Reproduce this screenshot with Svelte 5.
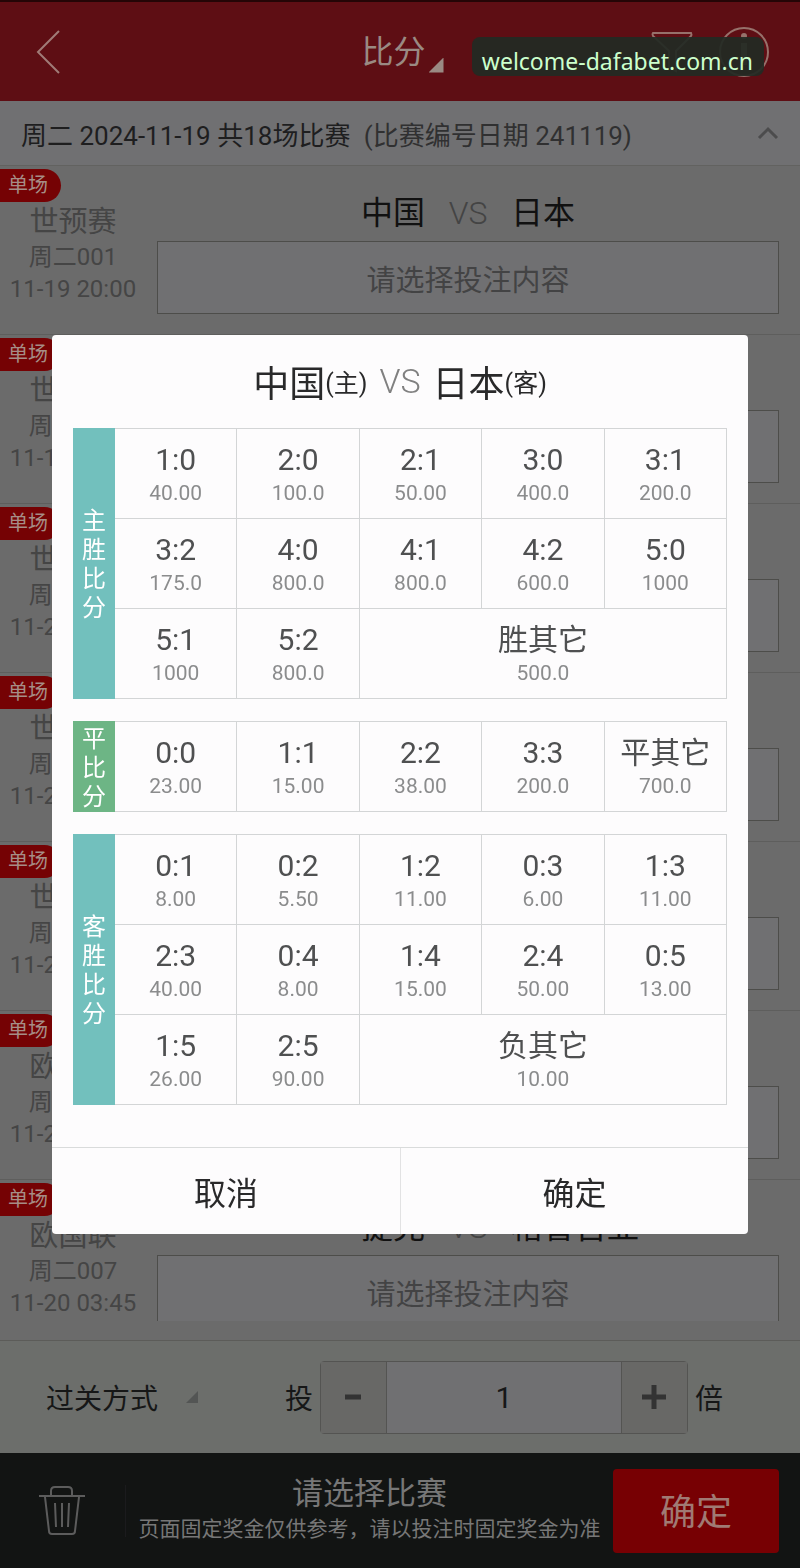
<script lang="ts">
	type Match = { league: string; no: string; time: string; home?: string; away?: string };
	type Option = { score: string; odds: string; wide?: boolean };
	type Group = { name: string; kind: string; options: Option[] };

	const matches: Match[] = [
		{ league: '世预赛', no: '周二001', time: '11-19 20:00', home: '中国', away: '日本' },
		{ league: '世预赛', no: '周二002', time: '11-19 22:00' },
		{ league: '世预赛', no: '周二003', time: '11-20 00:15' },
		{ league: '世预赛', no: '周二004', time: '11-20 02:00' },
		{ league: '世预赛', no: '周二005', time: '11-20 03:00' },
		{ league: '欧国联', no: '周二006', time: '11-20 03:45' },
		{ league: '欧国联', no: '周二007', time: '11-20 03:45', home: '捷克', away: '格鲁吉亚' }
	];

	const groups: Group[] = [
		{
			name: '主胜比分',
			kind: 'win',
			options: [
				{ score: '1:0', odds: '40.00' },
				{ score: '2:0', odds: '100.0' },
				{ score: '2:1', odds: '50.00' },
				{ score: '3:0', odds: '400.0' },
				{ score: '3:1', odds: '200.0' },
				{ score: '3:2', odds: '175.0' },
				{ score: '4:0', odds: '800.0' },
				{ score: '4:1', odds: '800.0' },
				{ score: '4:2', odds: '600.0' },
				{ score: '5:0', odds: '1000' },
				{ score: '5:1', odds: '1000' },
				{ score: '5:2', odds: '800.0' },
				{ score: '胜其它', odds: '500.0', wide: true }
			]
		},
		{
			name: '平比分',
			kind: 'draw',
			options: [
				{ score: '0:0', odds: '23.00' },
				{ score: '1:1', odds: '15.00' },
				{ score: '2:2', odds: '38.00' },
				{ score: '3:3', odds: '200.0' },
				{ score: '平其它', odds: '700.0' }
			]
		},
		{
			name: '客胜比分',
			kind: 'lose',
			options: [
				{ score: '0:1', odds: '8.00' },
				{ score: '0:2', odds: '5.50' },
				{ score: '1:2', odds: '11.00' },
				{ score: '0:3', odds: '6.00' },
				{ score: '1:3', odds: '11.00' },
				{ score: '2:3', odds: '40.00' },
				{ score: '0:4', odds: '8.00' },
				{ score: '1:4', odds: '15.00' },
				{ score: '2:4', odds: '50.00' },
				{ score: '0:5', odds: '13.00' },
				{ score: '1:5', odds: '26.00' },
				{ score: '2:5', odds: '90.00' },
				{ score: '负其它', odds: '10.00', wide: true }
			]
		}
	];

	let open = $state(true);
	let times = $state(1);
	let picked: string[] = $state([]);

	function toggle(score: string) {
		picked = picked.includes(score) ? picked.filter((s) => s !== score) : [...picked, score];
	}
</script>

<div class="page">
	<header>
		<button class="back" aria-label="返回">
			<svg width="26" height="46" viewBox="0 0 26 46"><path d="M24 2 3 23l21 21" /></svg>
		</button>
		<button class="play">比分<i class="corner"></i></button>
		<div class="tools">
			<button aria-label="筛选">
				<svg width="44" height="46" viewBox="0 0 44 46">
					<path d="M3 4h38q1 2 0 3L26 22v20l-7-4V22L3 7q-1-2 0-3z" />
				</svg>
			</button>
			<button aria-label="说明">
				<svg width="52" height="52" viewBox="0 0 52 52">
					<circle cx="26" cy="26" r="24" />
					<circle class="solid" cx="26" cy="10" r="3" />
					<path class="stem" d="M26 17v22" />
				</svg>
			</button>
		</div>
		<div class="site">welcome-dafabet.com.cn</div>
	</header>

	<button class="day">
		<span>周二 2024-11-19 共18场比赛 <em>(比赛编号日期 241119)</em></span>
		<svg width="22" height="14" viewBox="0 0 22 14"><path d="M2 12l9-9 9 9" /></svg>
	</button>

	<main>
		{#each matches as m}
			<section class="match">
				<span class="badge">单场</span>
				<div class="info">
					<span class="league">{m.league}</span>
					<span class="no">{m.no}</span>
					<span class="time">{m.time}</span>
				</div>
				<div class="bet">
					<div class="teams">
						{#if m.home}
							<span class="home">{m.home}</span>
							<span class="vs">VS</span>
							<span>{m.away}</span>
						{/if}
					</div>
					<button class="choose" aria-label="投注" onclick={() => (open = true)}>
						{#if m.home}请选择投注内容{/if}
					</button>
				</div>
			</section>
		{/each}
	</main>

	<div class="options">
		<button class="pass">过关方式<i class="corner"></i></button>
		<div class="times">
			<label for="times">投</label>
			<div class="stepper">
				<button aria-label="减少" onclick={() => (times = Math.max(1, times - 1))}>
					<svg width="26" height="26" viewBox="0 0 26 26"><path d="M5 13h16" /></svg>
				</button>
				<input id="times" type="text" inputmode="numeric" bind:value={times} />
				<button aria-label="增加" onclick={() => (times += 1)}>
					<svg width="26" height="26" viewBox="0 0 26 26"><path d="M1 13h24M13 1v24" /></svg>
				</button>
			</div>
			<span>倍</span>
		</div>
	</div>

	<footer>
		<button class="trash" aria-label="清空">
			<svg width="48" height="52" viewBox="0 0 48 52">
				<path d="M1 11h46M13 10V6q0-4 4-4h13q4 0 4 4v4" />
				<path d="M7 12l4 34q0 3 3 3h20q3 0 3-3l4-34M17 18l1 24M24 18v24M31 18l-1 24" />
			</svg>
		</button>
		<div class="summary">
			<p class="hint">请选择比赛</p>
			<p class="note">页面固定奖金仅供参考，请以投注时固定奖金为准</p>
		</div>
		<button class="submit">确定</button>
	</footer>
</div>

{#if open}
	<div class="overlay">
		<div class="dialog" role="dialog" aria-modal="true" aria-labelledby="dialog-title">
			<h2 id="dialog-title">
				中国<small>(主)</small><span>VS</span>日本<small>(客)</small>
			</h2>

			<div class="groups">
				{#each groups as g}
					<div class="group">
						<div class="side {g.kind}"><span>{g.name}</span></div>
						<div class="cells">
							{#each g.options as o}
								<button
									class:wide={o.wide}
									class:picked={picked.includes(o.score)}
									onclick={() => toggle(o.score)}
								>
									<span class="score">{o.score}</span>
									<span class="odds">{o.odds}</span>
								</button>
							{/each}
						</div>
					</div>
				{/each}
			</div>

			<div class="actions">
				<button onclick={() => (open = false)}>取消</button>
				<button onclick={() => (open = false)}>确定</button>
			</div>
		</div>
	</div>
{/if}

<style>
	:global(body) {
		background: #6b6b6b;
		font-family: Roboto, 'Noto Sans CJK SC', sans-serif;
	}

	button,
	input {
		margin: 0;
		padding: 0;
		border: 0;
		background: none;
		font: inherit;
		color: inherit;
	}

	button {
		cursor: pointer;
	}

	svg {
		display: block;
		fill: none;
		stroke: currentColor;
		stroke-width: 2;
	}

	.page {
		display: flex;
		flex-direction: column;
		height: 100vh;
		color: #161717;
	}

	.corner {
		width: 15px;
		height: 15px;
		background: currentColor;
		clip-path: polygon(100% 0, 100% 100%, 0 100%);
	}

	/* top bar */
	header {
		position: relative;
		display: grid;
		grid-template-columns: 1fr auto 1fr;
		align-items: center;
		box-sizing: border-box;
		height: 101px;
		padding: 0 30px 0 35px;
		border-top: 2px solid #240506;
		background: #5e0e14;
		color: #96716b;
	}

	.back {
		justify-self: start;
		color: #a07b77;
	}

	.play {
		display: flex;
		align-items: flex-end;
		gap: 3px;
		font-size: 32px;
		line-height: 42px;
		color: #9a8a83;
	}

	.tools {
		display: flex;
		align-items: center;
		justify-content: flex-end;
		gap: 24px;
	}

	.solid {
		fill: currentColor;
		stroke: none;
	}

	.stem {
		stroke-width: 6;
	}

	.site {
		position: absolute;
		top: 35px;
		right: 36px;
		box-sizing: border-box;
		height: 39px;
		padding: 9px 11px 0 10px;
		border-radius: 8px;
		background: rgba(34, 42, 35, 0.93);
		font-family: 'Noto Sans', sans-serif;
		font-size: 23px;
		line-height: 30px;
		color: #ccffcc;
	}

	.day {
		display: flex;
		align-items: center;
		justify-content: space-between;
		height: 65px;
		padding: 0 21px;
		border-bottom: 1px solid #626260;
		background: #707072;
		font-size: 26px;
		color: #1e1e1f;
	}

	.day em {
		margin-left: 7px;
		font-style: normal;
		color: #303031;
	}

	.day svg {
		color: #4c4c4d;
		stroke-width: 3;
	}

	/* match list */
	main {
		flex: 1;
		min-height: 0;
		margin-bottom: 19px;
		overflow: hidden;
	}

	.match {
		position: relative;
		display: grid;
		grid-template-columns: 146px 1fr;
		column-gap: 11px;
		padding-right: 21px;
		border-bottom: 1px solid #5e5e5d;
	}

	.badge {
		position: absolute;
		top: 3px;
		left: 0;
		padding: 0 13px 0 8px;
		border-radius: 0 17px 17px 0;
		background: #750204;
		font-size: 20px;
		line-height: 33px;
		color: #a68d86;
	}

	.info {
		display: flex;
		flex-direction: column;
		align-items: center;
		padding-top: 38px;
		color: #454545;
	}

	.league {
		font-size: 29px;
		line-height: 36px;
	}

	.no {
		font-size: 24px;
		line-height: 34px;
	}

	.time {
		font-size: 24px;
		line-height: 30px;
	}

	.bet {
		padding: 27px 0 20px;
	}

	.teams {
		display: grid;
		grid-template-columns: 1fr 86px 1fr;
		min-height: 40px;
		margin-bottom: 8px;
		font-size: 32px;
		line-height: 40px;
		color: #111;
	}

	.home {
		text-align: right;
	}

	.vs {
		text-align: center;
		font-weight: 300;
		color: #444;
	}

	.choose {
		display: block;
		width: 100%;
		height: 73px;
		border: 1px solid #4d4d4a;
		background: #707072;
		font-size: 29px;
		color: #434344;
	}

	/* pass type and multiplier */
	.options {
		display: flex;
		align-items: center;
		justify-content: space-between;
		box-sizing: border-box;
		height: 113px;
		padding: 0 77px 0 46px;
		border-top: 1px solid #5c5c59;
		background: #6c6e6b;
		font-size: 28px;
	}

	.pass {
		display: flex;
		align-items: center;
		gap: 28px;
	}

	.pass .corner {
		width: 12px;
		height: 12px;
		color: #535554;
	}

	.times {
		display: flex;
		align-items: center;
		gap: 7px;
	}

	.stepper {
		display: grid;
		grid-template-columns: 65px 236px 65px;
		height: 71px;
		border: 1px solid #545452;
		border-radius: 4px;
		background: #707072;
	}

	.stepper button {
		display: grid;
		place-items: center;
		background: #686866;
		color: #333;
	}

	.stepper svg {
		stroke-width: 5;
	}

	.stepper input {
		min-width: 0;
		border: solid #545452;
		border-width: 0 1px;
		text-align: center;
		font-size: 30px;
	}

	/* bottom bar */
	footer {
		display: flex;
		align-items: center;
		box-sizing: border-box;
		height: 115px;
		padding: 0 21px 0 38px;
		background: #121413;
		color: #777;
	}

	.trash {
		padding-right: 39px;
		border-right: 1px solid #1b1b1d;
		color: #5c5c5c;
	}

	.summary {
		flex: 1;
		text-align: center;
		white-space: nowrap;
	}

	.summary p {
		margin: 0;
	}

	.hint {
		font-size: 31px;
		line-height: 36px;
	}

	.note {
		font-size: 21px;
		line-height: 34px;
	}

	.submit {
		width: 166px;
		height: 84px;
		padding-bottom: 3px;
		border-radius: 4px;
		background: #770003;
		font-size: 36px;
		color: #a07a74;
	}

	/* score dialog */
	.overlay {
		position: fixed;
		inset: 0;
		display: flex;
		align-items: center;
		padding: 0 52px;
	}

	.dialog {
		flex: 1;
		border-radius: 4px;
		background: #fdfcfd;
		overflow: hidden;
	}

	h2 {
		display: flex;
		align-items: center;
		justify-content: center;
		height: 93px;
		margin: 0;
		font-size: 36px;
		font-weight: 400;
		color: #29292a;
	}

	h2 small {
		font-size: 25px;
	}

	h2 span {
		margin: 0 12px;
		font-size: 34px;
		font-weight: 300;
		color: #808080;
	}

	.groups {
		display: flex;
		flex-direction: column;
		gap: 22px;
		padding: 0 21px 42px;
	}

	.group {
		display: grid;
		grid-template-columns: 42px 1fr;
	}

	.side {
		display: grid;
		place-items: center;
		padding-top: 4px;
		background: #72c0bd;
		font-size: 24px;
		line-height: 29px;
		color: #fff;
	}

	.side span {
		width: 24px;
	}

	.side.draw {
		background: #6db585;
	}

	.cells {
		display: grid;
		grid-template-columns: repeat(5, 1fr);
		gap: 1px;
		padding: 1px 1px 1px 0;
		background: #d3d5d6;
	}

	.cells button {
		display: flex;
		flex-direction: column;
		align-items: center;
		padding: 12px 0 11px;
		background: #fdfcfd;
	}

	.cells .wide {
		grid-column: span 3;
	}

	.cells .picked {
		background: #fbe3e4;
	}

	.score {
		font-size: 30px;
		line-height: 38px;
		color: #4f5051;
	}

	.odds {
		font-size: 21px;
		line-height: 28px;
		color: #8b8c8d;
	}

	.actions {
		display: grid;
		grid-template-columns: 1fr 1fr;
		border-top: 1px solid #d9dbdb;
	}

	.actions button {
		height: 86px;
		font-size: 32px;
		color: #29292a;
	}

	.actions button + button {
		border-left: 1px solid #e2e2e3;
	}
</style>
